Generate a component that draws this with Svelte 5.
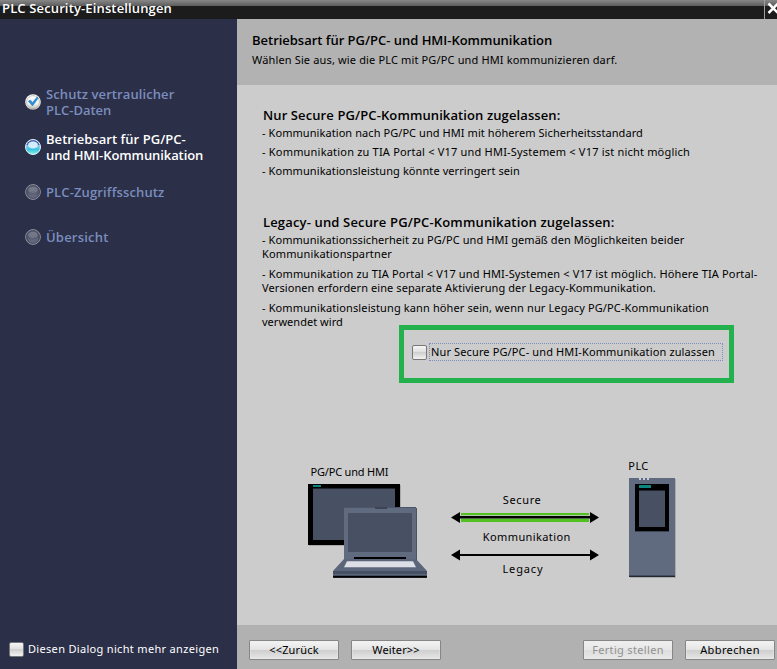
<script>
  const steps = [
    { state: 'done', lines: [['Schutz vertraulicher', 129], ['PLC-Daten', 66]] },
    { state: 'active', lines: [['Betriebsart für PG/PC-', 140.5], ['und HMI-Kommunikation', 158]] },
    { state: 'open', lines: [['PLC-Zugriffsschutz', 119]] },
    { state: 'open', lines: [['Übersicht', 63]] }
  ];

  const sections = [
    {
      title: ['Nur Secure PG/PC-Kommunikation zugelassen:', 298],
      items: [
        [['- Kommunikation nach PG/PC und HMI mit höherem Sicherheitsstandard', 381.5]],
        [['- Kommunikation zu TIA Portal < V17 und HMI-Systemem < V17 ist nicht möglich', 428.5]],
        [['- Kommunikationsleistung könnte verringert sein', 258.5]]
      ]
    },
    {
      title: ['Legacy- und Secure PG/PC-Kommunikation zugelassen:', 352],
      items: [
        [['- Kommunikationssicherheit zu PG/PC und HMI gemäß den Möglichkeiten beider', 423], ['Kommunikationspartner', 130.5]],
        [['- Kommunikation zu TIA Portal < V17 und HMI-Systemen < V17 ist möglich. Höhere TIA Portal-', 496], ['Versionen erfordern eine separate Aktivierung der Legacy-Kommunikation.', 394.5]],
        [['- Kommunikationsleistung kann höher sein, wenn nur Legacy PG/PC-Kommunikation', 447.5], ['verwendet wird', 81.5]]
      ]
    }
  ];

  // Spreads the letters of a line so that its last letter ends at the given width.
  function fit(node, width) {
    const natural = node.getBoundingClientRect().width;
    node.style.letterSpacing = (width - 0.7 - natural) / (node.textContent.length - 1) + 'px';
  }
</script>

{#snippet line(text, width)}<span class="line" use:fit={width}>{text}</span>{/snippet}

<div class="dialog">
  <header class="titlebar">
    <span class="caption">{@render line('PLC Security-Einstellungen', 170.5)}</span>
    <button class="close" aria-label="Schließen">
      <svg width="12" height="19" viewBox="0 0 12 19"><path d="M3.5 3.5 L13 13 M13 3.5 L3.5 13" stroke="#fff" stroke-width="2.5" /></svg>
    </button>
  </header>

  <div class="body">
    <aside>
      <ol>
        {#each steps as step}
          <li class={step.state}>
            <svg width="16" height="16" viewBox="0 0 16 16">
              {#if step.state === 'done'}
                <circle cx="8" cy="8" r="7.8" fill="url(#pearl)" />
                <circle cx="8" cy="8" r="6.4" fill="none" stroke="#aaa9a5" stroke-width=".7" />
                <path d="M3.3 7.2 L5.4 6 L7.4 8.6 L12.3 2.8 L13.2 4.2 L7.5 12 Z" fill="#2d91d8" stroke="#1c78bd" stroke-width=".5" />
              {:else if step.state === 'active'}
                <circle cx="8" cy="8" r="7.5" fill="url(#aqua)" stroke="#e8eef5" />
                <path d="M2 6 A6.4 6.4 0 0 1 14 6" fill="none" stroke="#3046a0" stroke-width="1" />
                <ellipse cx="8" cy="6" rx="4.8" ry="3.6" fill="#eaf6ff" opacity=".8" />
              {:else}
                <circle cx="8" cy="8" r="7.4" fill="url(#slate)" stroke="#8c8f9d" stroke-width="1" />
                <circle cx="8" cy="8" r="6.3" fill="none" stroke="#404457" stroke-width=".9" />
                <ellipse cx="8" cy="6" rx="4.6" ry="3" fill="#9294a2" opacity=".45" />
              {/if}
            </svg>
            <div class="label">
              {#each step.lines as [text, width]}{@render line(text, width)}{/each}
            </div>
          </li>
        {/each}
      </ol>
      <label class="hide-dialog">
        <span class="check"></span>
        {@render line('Diesen Dialog nicht mehr anzeigen', 191.5)}
      </label>
    </aside>

    <main>
      <div class="head">
        <h1>{@render line('Betriebsart für PG/PC- und HMI-Kommunikation', 301)}</h1>
        <p>{@render line('Wählen Sie aus, wie die PLC mit PG/PC und HMI kommunizieren darf.', 366)}</p>
      </div>

      <div class="content">
        {#each sections as section, i}
          <section class:wide={i === 1}>
            <h2>{@render line(section.title[0], section.title[1])}</h2>
            <div class="items">
              {#each section.items as item}
                <p>{#each item as [text, width]}{@render line(text, width)}{/each}</p>
              {/each}
            </div>
          </section>
        {/each}

        <label class="secure-only">
          <span class="check"></span>
          <span class="focus">{@render line('Nur Secure PG/PC- und HMI-Kommunikation zulassen', 284.5)}</span>
        </label>
        <div class="marker"></div>

        <svg class="diagram" width="400" height="130" viewBox="300 455 400 130">
          <defs>
            <linearGradient id="pearl" x2="0" y2="1"><stop offset="0" stop-color="#fff" /><stop offset=".6" stop-color="#f3f3f1" /><stop offset="1" stop-color="#b9b8b2" /></linearGradient>
            <linearGradient id="aqua" x2="0" y2="1"><stop offset="0" stop-color="#7fa8e0" /><stop offset=".5" stop-color="#7cc8ee" /><stop offset=".65" stop-color="#35c3dc" /><stop offset="1" stop-color="#8df3f4" /></linearGradient>
            <linearGradient id="slate" x2="0" y2="1"><stop offset="0" stop-color="#696c7e" /><stop offset=".5" stop-color="#55596d" /><stop offset="1" stop-color="#73768a" /></linearGradient>
          </defs>
          <text x="310.5" y="476" textLength="78">PG/PC und HMI</text>
          <g shape-rendering="crispEdges">
            <rect x="309" y="485" width="92" height="61" fill="#aaa" />
            <rect x="308" y="484" width="92" height="61" fill="#000" />
            <rect x="313" y="488" width="82" height="52" fill="#485163" />
            <rect x="313" y="488" width="82" height="1" fill="#20252e" />
            <rect x="313" y="485" width="8" height="2" fill="#0d8682" />
            <rect x="344" y="508" width="73" height="52" fill="#4c5363" />
            <rect x="344" y="507" width="72" height="52" fill="#616b80" />
            <rect x="344" y="507" width="72" height="1" fill="#4c566a" />
            <rect x="375" y="507" width="12" height="2" fill="#3d4555" />
            <rect x="348" y="513" width="64" height="39" fill="#485163" />
            <rect x="354" y="557" width="52" height="2" fill="#000" />
          </g>
          <path d="M344 559 H416 L427 571 V576 Q427 578 425 578 H335 Q333 578 333 576 V571 Z" fill="#5c667b" />
          <path d="M333 571 H427 V574 H333 Z" fill="#465064" />
          <path d="M333 575.8 H427 V577.8 H333 Z" fill="#000" />
          <path d="M347 561.3 H413 L416 567.2 H344 Z" fill="#dcdfe5" />

          <text x="502.8" y="504" textLength="38">Secure</text>
          <text x="482.8" y="541" textLength="87.5">Kommunikation</text>
          <text x="502.5" y="573" textLength="40">Legacy</text>
          <g shape-rendering="crispEdges">
            <rect x="461" y="513" width="128" height="9" fill="#50c11e" />
            <rect x="461" y="515" width="128" height="4" fill="#b4c9a8" />
            <rect x="459" y="516" width="132" height="2" fill="#000" />
            <rect x="459" y="518" width="132" height="1" fill="#526b4a" />
            <rect x="459" y="554" width="132" height="2" fill="#000" />
          </g>
          <path d="M451 517.4 L460 512 V523 Z M599 517.4 L590 512 V523 Z M451 555 L460 549.5 V560.5 Z M599 555 L590 549.5 V560.5 Z" />

          <text x="628.3" y="470" textLength="20">PLC</text>
          <g shape-rendering="crispEdges">
            <rect x="630" y="479" width="46" height="99" fill="#aaa" />
            <rect x="629" y="478" width="46" height="99" fill="#616b80" />
            <rect x="639" y="478" width="2" height="2" fill="#ccd" />
            <rect x="643" y="478" width="2" height="2" fill="#ccd" />
            <rect x="647" y="478" width="2" height="2" fill="#ccd" />
            <rect x="635" y="484" width="34" height="47" fill="#000" />
            <rect x="635" y="531" width="34" height="1" fill="#3d4555" />
            <rect x="639" y="490" width="26" height="37" fill="#485163" />
            <rect x="639" y="490" width="26" height="1" fill="#20252e" />
            <rect x="639" y="485" width="12" height="3" fill="#0d8682" />
            <rect x="629" y="575" width="46" height="1" fill="#464f60" />
            <rect x="629" y="576" width="46" height="1" fill="#222731" />
          </g>
        </svg>
      </div>

      <footer>
        <button>{@render line('<<Zurück', 50)}</button>
        <button>{@render line('Weiter>>', 48)}</button>
        <span class="spacer"></span>
        <button disabled>{@render line('Fertig stellen', 72)}</button>
        <button>{@render line('Abbrechen', 60)}</button>
      </footer>
    </main>
  </div>
</div>

<style>
  .dialog {
    width: 777px;
    height: 669px;
    display: flex;
    flex-direction: column;
    overflow: hidden;
    font: 11px/14px "Noto Sans", "Open Sans", sans-serif;
    color: #000;
  }
  .line { display: block; width: max-content; white-space: nowrap; }
  h1, h2, p, ol { margin: 0; padding: 0; list-style: none; }
  h1, h2 { font: 600 13px/18px "Open Sans", "Noto Sans", sans-serif; }

  .titlebar {
    height: 19px;
    flex: none;
    display: flex;
    justify-content: space-between;
    background: linear-gradient(#878787, #5c5c5c 6px, #1c1c1c 6px);
    color: #fff;
  }
  .caption { padding-left: 2px; font: 600 13px/16px "Open Sans", "Noto Sans", sans-serif; }
  .close {
    width: 13px;
    height: 19px;
    padding: 0;
    border: 0;
    border-left: 1px solid #a0a0a0;
    background: none;
    overflow: hidden;
  }
  .close svg { display: block; }

  .body { flex: 1; display: flex; }
  aside {
    width: 237px;
    flex: none;
    display: flex;
    flex-direction: column;
    justify-content: space-between;
    background: #2b2f48;
  }
  ol { padding: 60px 0 0 25px; }
  li {
    height: 45px;
    display: flex;
    align-items: center;
    gap: 5px;
    color: #7b8dbd;
    font: 600 13px/16px "Open Sans", "Noto Sans", sans-serif;
  }
  li.active { color: #fff; }
  .hide-dialog {
    display: flex;
    align-items: center;
    gap: 4px;
    padding: 0 0 12px 9px;
    color: #fff;
  }
  .hide-dialog .line { padding-bottom: 2px; line-height: 13px; }
  .check {
    width: 13px;
    height: 13px;
    flex: none;
    border: 1px solid #777;
    border-radius: 2px;
    background: linear-gradient(#f6f6f6, #e0e0e0 45%, #cfcfcf 50%, #f2f2f2);
  }

  main { flex: 1; display: flex; flex-direction: column; }
  .head { height: 48px; padding: 12px 0 6px 15px; background: #b2b2b2; }
  .head p { margin-top: 4px; }
  .content { position: relative; height: 519px; padding: 21px 0 0 25px; background: #ccc; }
  section h2 { padding-left: 1px; }
  .items { display: flex; flex-direction: column; gap: 5px; padding-top: 2px; }
  .wide { margin-top: 35px; }
  .wide .items { gap: 6px; }
  .secure-only { display: flex; align-items: center; gap: 2px; margin: 14px 0 0 150px; }
  .focus { padding: 1px 7px 1px 1px; border: 1px dotted #7b8fc4; }
  .marker {
    position: absolute;
    left: 162px;
    top: 240px;
    width: 325px;
    height: 48px;
    border: 5px solid #22b14c;
  }
  .diagram { display: block; margin: 94px 0 0 38px; }
  .diagram text { font: 11px "Noto Sans", "Open Sans", sans-serif; }

  footer { flex: 1; display: flex; gap: 12px; padding: 15px 2px 0 12px; background: #b1b1b1; }
  footer button {
    width: 90px;
    height: 20px;
    display: flex;
    justify-content: center;
    align-items: center;
    padding: 0;
    border: 1px solid #868686;
    border-radius: 1px;
    background: linear-gradient(#f4f4f4, #e4e4e4 48%, #cfcfcf 52%, #e6e6e6);
    box-shadow: inset 0 0 0 1px #ececec66;
    font: inherit;
    color: #000;
  }
  footer button:disabled { color: #929292; background: linear-gradient(#f0f0f0, #e7e7e7 48%, #dedede 52%, #e8e8e8); }
  .spacer { flex: 1; }
</style>
